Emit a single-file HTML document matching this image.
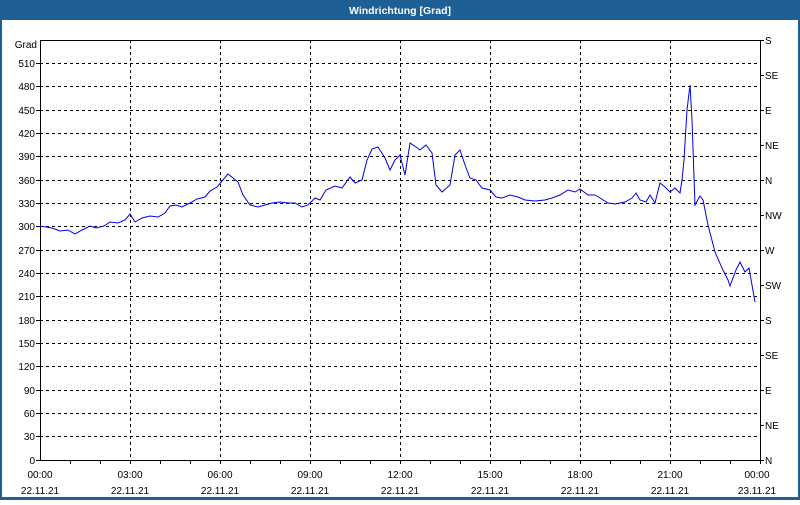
<!DOCTYPE html>
<html><head><meta charset="utf-8"><style>
body{margin:0;width:800px;height:500px;overflow:hidden;background:#fff;font-family:"Liberation Sans",sans-serif}
</style></head><body>
<svg width="800" height="500" xmlns="http://www.w3.org/2000/svg" font-family="Liberation Sans, sans-serif" font-size="10">
<rect x="0" y="0" width="800" height="500" fill="#1e5f96"/>
<rect x="2" y="20" width="796" height="477" fill="#fff"/>
<text x="400" y="14" fill="#fff" font-weight="bold" font-size="10.5" text-anchor="middle">Windrichtung [Grad]</text>
<g stroke="#000" stroke-dasharray="3,3" stroke-width="1">
<line x1="40" y1="63.5" x2="760" y2="63.5"/><line x1="40" y1="86.5" x2="760" y2="86.5"/><line x1="40" y1="110.5" x2="760" y2="110.5"/><line x1="40" y1="133.5" x2="760" y2="133.5"/><line x1="40" y1="156.5" x2="760" y2="156.5"/><line x1="40" y1="180.5" x2="760" y2="180.5"/><line x1="40" y1="203.5" x2="760" y2="203.5"/><line x1="40" y1="226.5" x2="760" y2="226.5"/><line x1="40" y1="250.5" x2="760" y2="250.5"/><line x1="40" y1="273.5" x2="760" y2="273.5"/><line x1="40" y1="296.5" x2="760" y2="296.5"/><line x1="40" y1="320.5" x2="760" y2="320.5"/><line x1="40" y1="343.5" x2="760" y2="343.5"/><line x1="40" y1="366.5" x2="760" y2="366.5"/><line x1="40" y1="390.5" x2="760" y2="390.5"/><line x1="40" y1="413.5" x2="760" y2="413.5"/><line x1="40" y1="436.5" x2="760" y2="436.5"/>
<line x1="130.5" y1="40" x2="130.5" y2="460"/><line x1="220.5" y1="40" x2="220.5" y2="460"/><line x1="310.5" y1="40" x2="310.5" y2="460"/><line x1="400.5" y1="40" x2="400.5" y2="460"/><line x1="490.5" y1="40" x2="490.5" y2="460"/><line x1="580.5" y1="40" x2="580.5" y2="460"/><line x1="670.5" y1="40" x2="670.5" y2="460"/>
</g>
<rect x="40.5" y="40.5" width="720" height="420" fill="none" stroke="#000"/>
<g stroke="#000">
<path d="M70.5 460v4M100.5 460v4M130.5 460v4M160.5 460v4M190.5 460v4M220.5 460v4M250.5 460v4M280.5 460v4M310.5 460v4M340.5 460v4M370.5 460v4M400.5 460v4M430.5 460v4M460.5 460v4M490.5 460v4M520.5 460v4M550.5 460v4M580.5 460v4M610.5 460v4M640.5 460v4M670.5 460v4M700.5 460v4M730.5 460v4M760.5 460v4"/>
<path d="M36 63.5h4M36 86.5h4M36 110.5h4M36 133.5h4M36 156.5h4M36 180.5h4M36 203.5h4M36 226.5h4M36 250.5h4M36 273.5h4M36 296.5h4M36 320.5h4M36 343.5h4M36 366.5h4M36 390.5h4M36 413.5h4M36 436.5h4M36 460.5h4"/>
<path d="M760 40.5h4M760 75.5h4M760 110.5h4M760 145.5h4M760 180.5h4M760 215.5h4M760 250.5h4M760 285.5h4M760 320.5h4M760 355.5h4M760 390.5h4M760 425.5h4M760 460.5h4"/>
</g>
<g text-anchor="end" fill="#000">
<text x="37" y="48">Grad</text>
<text x="35" y="67">510</text><text x="35" y="90">480</text><text x="35" y="114">450</text><text x="35" y="137">420</text><text x="35" y="160">390</text><text x="35" y="184">360</text><text x="35" y="207">330</text><text x="35" y="230">300</text><text x="35" y="254">270</text><text x="35" y="277">240</text><text x="35" y="300">210</text><text x="35" y="324">180</text><text x="35" y="347">150</text><text x="35" y="370">120</text><text x="35" y="394">90</text><text x="35" y="417">60</text><text x="35" y="440">30</text><text x="35" y="464">0</text>
</g>
<g fill="#000">
<text x="765" y="44">S</text><text x="765" y="79">SE</text><text x="765" y="114">E</text><text x="765" y="149">NE</text><text x="765" y="184">N</text><text x="765" y="219">NW</text><text x="765" y="254">W</text><text x="765" y="289">SW</text><text x="765" y="324">S</text><text x="765" y="359">SE</text><text x="765" y="394">E</text><text x="765" y="429">NE</text><text x="765" y="464">N</text>
</g>
<g text-anchor="middle" fill="#000">
<text x="40" y="478">00:00</text><text x="130" y="478">03:00</text><text x="220" y="478">06:00</text><text x="310" y="478">09:00</text><text x="400" y="478">12:00</text><text x="490" y="478">15:00</text><text x="580" y="478">18:00</text><text x="670" y="478">21:00</text><text x="757" y="478">00:00</text>
<text x="40" y="494">22.11.21</text><text x="130" y="494">22.11.21</text><text x="220" y="494">22.11.21</text><text x="310" y="494">22.11.21</text><text x="400" y="494">22.11.21</text><text x="490" y="494">22.11.21</text><text x="580" y="494">22.11.21</text><text x="670" y="494">22.11.21</text><text x="757" y="494">23.11.21</text>
</g>
<polyline fill="none" stroke="#0000ee" stroke-width="1" points="40,226 52,228 60,231 68,230 75,234 82,230 90,226 96,228 104,226 110,222 118,223 125,220 130,214 135,222 142,218 150,216 158,217 165,213 170,206 176,205 182,207 190,203 197,199 205,197 210,191 217,187 222,181 228,174 233,178 238,182 243,195 250,205 258,207 265,205 272,203 280,202 288,203 295,203 302,207 308,205 315,198 320,200 326,190 335,186 342,188 350,177 355,183 362,180 367,160 372,149 378,147 385,158 390,170 395,160 400,155 405,175 410,143 416,147 420,150 426,145 432,153 436,185 442,192 450,185 455,155 460,150 465,165 470,178 476,180 482,188 490,190 496,197 502,198 510,195 518,197 525,200 535,201 545,200 552,198 560,195 568,190 575,192 580,189 588,195 595,195 600,198 608,203 615,204 625,202 632,198 636,193 640,200 646,202 650,195 655,203 660,183 665,187 670,192 675,188 680,193 682,180 684,160 687,110 690,85 692,120 695,205 700,196 703,200 708,225 715,252 722,268 728,280 730,286 736,270 740,262 745,272 749,268 752,285 755,302"/>
</svg>
</body></html>
